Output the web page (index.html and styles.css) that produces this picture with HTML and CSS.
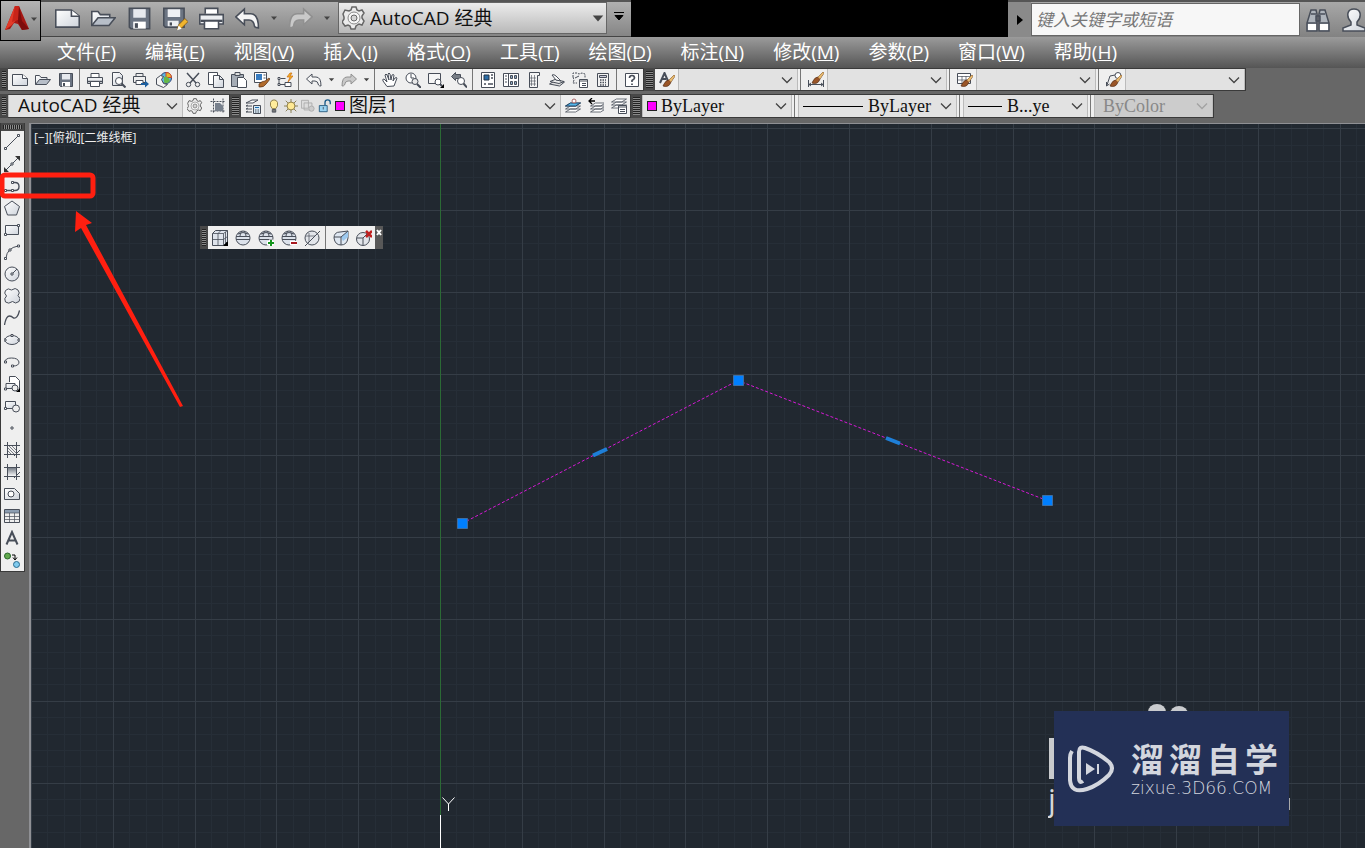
FILE: index.html
```html
<!DOCTYPE html>
<html lang="zh-CN">
<head>
<meta charset="utf-8">
<title>AutoCAD 经典</title>
<link rel="stylesheet" href="styles.css">
</head>
<body>
<svg class="defs" aria-hidden="true">
  <defs>
    <linearGradient id="paper" x1="0" y1="0" x2="1" y2="1"><stop offset="0" stop-color="#fff"/><stop offset="1" stop-color="#cfd4dc"/></linearGradient>
    <linearGradient id="shade" x1="0" y1="0" x2="0" y2="1"><stop offset="0" stop-color="#6e7580"/><stop offset="1" stop-color="#fff"/></linearGradient>
  </defs>
  <symbol id="new" viewBox="0 0 16 16"><path d="M.5 2.500h10l5 4v7H.5z" fill="url(#paper)"/><path d="M10.500 2.500v4h5" fill="#fff"/></symbol>
  <symbol id="open" viewBox="0 0 16 16"><path d="M.5 12.500v-9h4l1.500 2h6v2" fill="url(#paper)"/><path d="M.5 12.500l4-5h11l-4 5z" fill="#b7bec8"/></symbol>
  <symbol id="save" viewBox="0 0 16 16"><path d="M1.500 1.500h13v13h-12l-1-1z" fill="#6b7482"/><path d="M4 2h8v5.500H4z" fill="#e6e9ee" stroke="none"/><path d="M4 10h8v4.500H4z" fill="#fff" stroke="none"/><path d="M6 11v3" stroke-width="2"/></symbol>
  <symbol id="pencil" viewBox="0 0 16 16"><path d="M.5 1.500h13v12h-12l-1-1z" fill="#6b7482"/><path d="M3 2h8v5H3zM3 9.500h7V13H3z" fill="#eef0f3" stroke="none"/><path d="M5 10.500v2" stroke-width="1.500"/><path d="M9 15l1-3 4-4 2 2-4 4z" fill="#f1b52e" stroke="#745014" stroke-width=".5"/><path d="M9 15.500l1-3 2 2z" fill="#fff" stroke="none"/></symbol>
  <symbol id="print" viewBox="0 0 16 16"><path d="M4 5V1.500h8V5" fill="#fff"/><path d="M.5 5.500h15v6H.5z" fill="#eceef1"/><path d="M1 9.500h14" stroke-width="1.500"/><path d="M3.500 9.500h9v5h-9z" fill="#fff"/></symbol>
  <symbol id="undo" viewBox="0 0 16 16"><path d="M.5 7L6 2v3h4q5 0 5 9-2 0-2.500-1-.5-4-3.500-4H6v3z" fill="#f5f5f5"/></symbol>
  <symbol id="redo" viewBox="0 0 16 16"><path d="M15.500 7L10 2v3H6q-5 0-5 9 2 0 2.500-1 .5-4 3.500-4h3v3z" fill="#c9c9c9" stroke="#909090"/></symbol>
  <symbol id="down" viewBox="0 0 8 8"><path d="M1 2.500h6L4 6z" fill="#444" stroke="none"/></symbol>
  <symbol id="chev" viewBox="0 0 12 12"><path d="M1 3.500l5 5 5-5" stroke="#444" stroke-width="1.300"/></symbol>
  <symbol id="gear" viewBox="0 0 24 24"><path d="M10 1h4l1 3 2 1 3-1 2 3-2 3v2l2 3-2 4-3-1-3 2-1 3h-4l-1-3-2-1-3 1-3-4 2-3v-2L1 8l2-4 4 1 2-1z" fill="#ececec" stroke="#666" stroke-width="1.500"/><circle cx="12" cy="12" r="6" fill="#f7f7f7" stroke="#888"/><circle cx="12" cy="12" r="3" fill="#d4d4d4" stroke="#666"/></symbol>
  <symbol id="preview" viewBox="0 0 16 16"><path d="M2.500.5h7l3 3v10h-10z" fill="url(#paper)"/><circle cx="9" cy="9" r="3.500" fill="#fff"/><path d="M11.500 11.500l4 4" stroke-width="2"/></symbol>
  <symbol id="publish" viewBox="0 0 16 16"><path d="M3 4V1.500h7V4M.5 4.500h12v6H.5z" fill="#eee"/><path d="M3 8.500h7v4H3z" fill="#fff"/><path d="M8 11h4V8.500l4 3.500-4 3.500V13H8z" fill="#1c5f9f" stroke="none"/></symbol>
  <symbol id="globe" viewBox="0 0 16 16"><circle cx="10" cy="6" r="5.500" fill="#58b8e4" stroke="#347"/><path d="M10 .5q5 0 5.500 5H10z" fill="#e9b62b" stroke="#c43"/><path d="M8 5q4-2 6 4-4 4-6 1z" fill="#67b848" stroke="none"/><path d="M.5 6.500l4-3 3 1-2 3 2 4 4 1-4 3-7-3z" fill="#f4f4f4"/></symbol>
  <symbol id="cut" viewBox="0 0 16 16"><path d="M2 1l9 10M14 1L5 11" stroke-width="1.500"/><circle cx="3.500" cy="12.500" r="2.200"/><circle cx="12.500" cy="12.500" r="2.200"/></symbol>
  <symbol id="copy" viewBox="0 0 16 16"><path d="M.5.5h9v12h-9z" fill="#fff"/><path d="M5.500 3.500h6l4 4v8h-10z" fill="url(#paper)"/><path d="M11.500 3.500v4h4"/></symbol>
  <symbol id="paste" viewBox="0 0 16 16"><path d="M.5 2.500h12v12H.5z" fill="#a5acb5"/><path d="M4 .5h5v3H4z" fill="#ddd"/><path d="M6.500 5.500h6l3 3v7h-9z" fill="#fff"/></symbol>
  <symbol id="match" viewBox="0 0 16 16"><path d="M.5.5h12v10H.5z" fill="#fff"/><path d="M2 2h6v6H2z" fill="#367bc0" stroke="none"/><path d="M9.500 3h2M9.500 6h2"/><path d="M5 12q3-3 6-3l4-3 1 1-3 4q-3 5-8 4z" fill="#b06a2b" stroke="#5b3418" stroke-width=".7"/></symbol>
  <symbol id="block" viewBox="0 0 16 16"><path d="M2 12.500h7M2 8v4M3.500 6.500h5"/><path d="M1 5.500h2v2H1zM1 11.500h2v2H1zM8 10.500h6v4H8z" fill="#fff"/><path d="M13 1l-3 4h3l-2 5 5-6h-3l2-3z" fill="#f9b221" stroke="#c96a12" stroke-width=".7"/></symbol>
  <symbol id="hand" viewBox="0 0 16 16"><path d="M5 14.500L1 9q-1-2 1-2l3 3-2-7q1-2 2 0l2 5-1-6q1-2 2 0l1 6 1-5q2-1 2 0l-1 6 2-3q2-1 2 0l-3 8z" fill="#fff"/></symbol>
  <symbol id="zoomrt" viewBox="0 0 16 16"><circle cx="6" cy="6" r="5" fill="#fff"/><path d="M6 2v4h3"/><circle cx="10" cy="9.500" r="3" fill="#e8e8e8"/><path d="M12 12l4 4" stroke-width="2"/></symbol>
  <symbol id="zoomwin" viewBox="0 0 16 16"><path d="M.5 1.500h12v10H.5z" fill="#f6f6f6"/><circle cx="10" cy="10" r="3" fill="#fff"/><path d="M12 12l2 2" stroke-width="2"/><path d="M16 12v4h-4z" fill="#000" stroke="none"/></symbol>
  <symbol id="zoomprev" viewBox="0 0 16 16"><path d="M.5 4.500l4-4v2h5v4h-5v2z" fill="#777d85"/><circle cx="10" cy="9" r="3.500" fill="#fff"/><path d="M12.500 11.500l3.500 4" stroke-width="2"/></symbol>
  <symbol id="props" viewBox="0 0 16 16"><path d="M1.500.5h13v15h-13z" fill="#fff"/><path d="M4 3h5v5H4z" fill="#2b6da7" stroke="#234"/><path d="M11 3h2M11 6h2M4 12h2M8 12h5" stroke-width="1.500"/></symbol>
  <symbol id="design" viewBox="0 0 16 16"><path d="M.5 1.500h15v13H.5zM5.500 1.500v13" fill="#fff"/><path d="M2 4h2M2 7h2M2 10h2M7.500 3.500h2v3h-2zM11.500 3.500h2v3h-2zM7.500 9.500h2v3h-2zM11.500 9.500h2v3h-2z" fill="#8ba7c2"/></symbol>
  <symbol id="palette" viewBox="0 0 16 16"><path d="M3.500.5h10v3h-2v12h-8z" fill="#f5f5f5"/><path d="M5.500 3v11M8.500 3v11M4 6h6M4 9h6M4 12h6" stroke-width=".6"/></symbol>
  <symbol id="sheets" viewBox="0 0 16 16"><path d="M.5 12l5-3 10 1-5 4z" fill="#ddd"/><path d="M1 9.500l5-2 9 2-5 2z" fill="#eee"/><path d="M3 3q2-1 4 1l5 5-5-1z" fill="#fff"/></symbol>
  <symbol id="markup" viewBox="0 0 16 16"><path d="M1 5V1h4l2 1 3-1 3 1v4M1 5l1 3-1 3h4" stroke-dasharray="2 1"/><path d="M3 6l4-2M7.500 7.500h8v8h-8z" fill="#fff"/><path d="M8 9h7M10 11.500h4M10 13.500h4"/></symbol>
  <symbol id="calc" viewBox="0 0 16 16"><path d="M2.500 1.500h11v13h-11z" fill="#f3f3f3"/><path d="M4.500 3.500h7v2h-7z" fill="#ccd"/><path d="M5 8h6M5 10.500h6M5 13h6" stroke-dasharray="1.500 1" stroke-width="1.500"/></symbol>
  <symbol id="help" viewBox="0 0 16 16"><path d="M1.500 1.500h13v13h-13z" fill="#fff"/><path d="M5.500 6q0-2.500 2.500-2.500T10.500 6Q10.500 7 8 8.500V10M8 11.500v1.500" stroke-width="1.700"/></symbol>
  <symbol id="brush" viewBox="0 0 16 16"><path d="M5 12q2-4 5-4l5-5 1 1-4 6q-2 6-8 4z" fill="#9a5527" stroke="#54301a" stroke-width=".7"/><path d="M10 8l5-5 1 1-4 6z" fill="#e7bb70" stroke="none"/></symbol>
  <symbol id="textstyle" viewBox="0 0 16 16"><path d="M1 11L5.500 1 9 9M3 7h4" stroke-width="2"/><use href="#brush"/></symbol>
  <symbol id="dimstyle" viewBox="0 0 16 16"><path d="M.5 8v7M15.500 8v7M1 12.500h14M3 11l-2 1.500L3 14M13 11l2 1.500-2 1.500"/><use href="#brush" y="-3"/></symbol>
  <symbol id="tablestyle" viewBox="0 0 16 16"><path d="M.5 1.500h13v10H.5z" fill="#fff"/><path d="M.5 4.500h13M.5 8h13M5 4v7M9 4v7" stroke-width=".7"/><use href="#brush"/></symbol>
  <symbol id="leader" viewBox="0 0 16 16"><path d="M1 13L4 4l5-1M.5 10v4l3-2"/><circle cx="12" cy="3.500" r="3" fill="#fff"/><use href="#brush"/></symbol>
  <symbol id="snap" viewBox="0 0 16 16"><path d="M3.500.5v15M13 .5v15M.5 3.500h15M.5 13h15" stroke-dasharray="2 1"/><path d="M5 5h5l3 3v5H5z" fill="#78818d" stroke="none"/></symbol>
  <symbol id="layers" viewBox="0 0 16 16"><path d="M1 5l6-3h6L8 5zM3 7L1 8h6M3 10l-2 1h6M3 13l-2 1h6" fill="#fff"/><path d="M8.500 7.500h7v8h-7z" fill="#d8eaf6"/><path d="M10 9.500h4" stroke="#1c6db0"/><path d="M10 12h4M10 14h4" stroke-dasharray="1 .5"/></symbol>
  <symbol id="bulb" viewBox="0 0 16 16"><path d="M6 11Q3 8 4 4q1-3 4-3t4 3q1 4-2 7z" fill="#ffec9b" stroke="#84733b"/><path d="M6 12h4v3H6z" fill="#777"/></symbol>
  <symbol id="sun" viewBox="0 0 16 16"><path d="M8 0v16M0 8h16M2 2l12 12M14 2L2 14" stroke="#817646"/><circle cx="8" cy="8" r="4.500" fill="#ffe994" stroke="#81713b"/></symbol>
  <symbol id="freeze" viewBox="0 0 16 16"><path d="M.5 1.500h8v9h-8zM3.500 4.500h9v8h-9z" fill="#ddd" stroke="#aaa"/><circle cx="12" cy="11" r="3" fill="#ccc" stroke="#aaa"/></symbol>
  <symbol id="lock" viewBox="0 0 16 16"><path d="M8 7V4q0-3 3-3t3 3v2" stroke="#185a89" stroke-width="1.500"/><path d="M1.500 7.500h9v7h-9z" fill="#9bd4f3" stroke="#22577c"/><path d="M6 9v3"/></symbol>
  <symbol id="stack" viewBox="0 0 16 16"><path d="M.5 14l5-3h10l-5 3zM.5 11l5-3h10l-5 3zM.5 8l5-3h10l-5 3z" fill="#fff" stroke-width=".8"/></symbol>
  <symbol id="laycur" viewBox="0 0 16 16"><use href="#stack"/><path d="M.5 8l5-3h10l-5 3z" fill="#55b8eb" stroke="#246"/><circle cx="9" cy="3" r="2" fill="#fff" stroke="#a66"/></symbol>
  <symbol id="layprev" viewBox="0 0 16 16"><use href="#stack" x="2"/><path d="M1 3h6M4 0L1 3l3 3" stroke="#000" stroke-width="1.300"/></symbol>
  <symbol id="laystate" viewBox="0 0 16 16"><use href="#stack" y="-4"/><path d="M7.500 7.500h8v8h-8z" fill="#fff"/><path d="M8 9h7M9 11.500h5M9 13.500h5"/></symbol>
  <symbol id="line" viewBox="0 0 16 16"><path d="M2 14L14 2"/><path d="M.5 13.500h2v2h-2zM13.500.5h2v2h-2z" fill="#fff"/></symbol>
  <symbol id="xline" viewBox="0 0 16 16"><path d="M2 14L14 2"/><path d="M0 16v-5l5 5zM16 0v5l-5-5z" fill="#333" stroke="none"/><path d="M7 7h2v2H7z" fill="#fff"/></symbol>
  <symbol id="pline" viewBox="0 0 16 16"><path d="M2 12.500h6M9 4.500h2q4 0 4 4t-4 4H8" stroke-width="1.400"/><path d="M.5 11.500h2v2h-2zM7.500 11.500h2v2h-2zM7.500 3.500h2v2h-2z" fill="#fff"/></symbol>
  <symbol id="polygon" viewBox="0 0 16 16"><path d="M8 1l7.500 5.500-3 8.500h-9L.5 6.500z" fill="url(#paper)"/></symbol>
  <symbol id="rect" viewBox="0 0 16 16"><path d="M1.500 3.500h13v9h-13z" fill="url(#paper)"/><path d="M.5 11.500h2v2h-2zM13.500 2.500h2v2h-2z" fill="#fff"/></symbol>
  <symbol id="arc" viewBox="0 0 16 16"><path d="M2 14Q3 4 14 2"/><path d="M.5 13.500h2v2h-2zM13.500 1h2v2h-2zM5 5h2v2H5z" fill="#fff"/></symbol>
  <symbol id="circle" viewBox="0 0 16 16"><circle cx="8" cy="8" r="7" fill="url(#paper)"/><path d="M8 8l5-5"/><path d="M7 7h2v2H7z" fill="#fff"/></symbol>
  <symbol id="cloud" viewBox="0 0 16 16"><path d="M2.500 8Q-.5 5 1.500 2.500 4-.5 7.500 2q4-3 6.500 0 2.500 3 0 5.500 3.500 3 1 6-3.500 3-6.500 0-4 3-7 .5Q-.5 10.500 2.500 8z" fill="url(#paper)"/></symbol>
  <symbol id="spline" viewBox="0 0 16 16"><path d="M.5 15Q2 6 5.500 6q2 0 4 2 4 1 6-7.500" stroke-width="1.300"/></symbol>
  <symbol id="ellipse" viewBox="0 0 16 16"><ellipse cx="8" cy="8" rx="7" ry="4.500" fill="url(#paper)"/><path d="M0 7h2v2H0zM14 7h2v2h-2zM7 2.500h2v2H7z" fill="#fff"/></symbol>
  <symbol id="earc" viewBox="0 0 16 16"><path d="M1 8q0-4 6.500-4T15 8q0 4-6 4"/><path d="M.5 7h2v2h-2zM7.500 11h2v2h-2z" fill="#fff"/></symbol>
  <symbol id="insert" viewBox="0 0 16 16"><path d="M5.500 6V.5h6l4 4V14" fill="#fff"/><path d="M2 7.500h9v5H2z" fill="url(#paper)"/><circle cx="11" cy="12" r="3" fill="#eee"/><path d="M.5 12h2v2h-2z" fill="#fff"/><path d="M16 12v4h-4z" fill="#000" stroke="none"/></symbol>
  <symbol id="mkblock" viewBox="0 0 16 16"><path d="M1.500 3.500h10v7h-10z" fill="url(#paper)"/><circle cx="12" cy="10.500" r="3.500" fill="#eee"/><path d="M.5 9.500h2v2h-2z" fill="#fff"/></symbol>
  <symbol id="point" viewBox="0 0 16 16"><path d="M7 7h2v2H7z" fill="#fff"/></symbol>
  <symbol id="hatch" viewBox="0 0 16 16"><path d="M3.500 0v16M12.500 0v16M0 3.500h16M0 12.500h16M10 14l6-6"/><path d="M4 9l4 4M4 6l6 6M5 4l7 7M8 4l4 4" stroke-width=".7"/></symbol>
  <symbol id="gradient" viewBox="0 0 16 16"><path d="M3.500 3.500h9v9h-9z" fill="url(#shade)"/><path d="M3.500 0v16M12.500 0v16M0 3.500h16M0 12.500h16M10 14l6-6"/></symbol>
  <symbol id="region" viewBox="0 0 16 16"><path d="M.5 2.500h10l5 5v6H.5z" fill="url(#paper)"/><circle cx="7" cy="8" r="3" fill="#fff"/></symbol>
  <symbol id="table" viewBox="0 0 16 16"><path d="M1 2h14v3H1z" fill="#8d9eb2" stroke="none"/><path d="M.5 1.500h15v13H.5z"/><path d="M1 5h14M1 8.500h14M1 11.500h14M5.500 5v9M10.500 5v9" stroke-width=".7"/></symbol>
  <symbol id="mtext" viewBox="0 0 16 16"><path d="M2.500 14.500L8 2l5.500 12.500M4.500 10.500h7" stroke-width="2"/></symbol>
  <symbol id="addsel" viewBox="0 0 16 16"><circle cx="3.500" cy="4" r="3" fill="#62a94d" stroke="#28662a"/><circle cx="12.500" cy="12.500" r="3" fill="#82cbee" stroke="#286b90"/><path d="M8 3h3v4M9 5.500L11 8l2-2.500" stroke="#000"/></symbol>
  <symbol id="cube" viewBox="0 0 16 16"><path d="M.5 3.500l3-3h12v11l-4 4H.5z" fill="#dfe4ec"/><path d="M.5 3.500h11v12M11.500 3.500l4-3M6 3.500v12M.5 9.500h11l4-3M6 3.500l3-3M13.500 2v12" stroke-width=".8"/><path d="M16 11v5h-5z" fill="#000" stroke="none"/></symbol>
  <symbol id="ball" viewBox="0 0 16 16"><circle cx="8" cy="8" r="7" fill="#dce2eb"/><path d="M1 6.500h14M1 9.500h14M3 4q5-3 10 0M5 6q0-3 2-5M11 6q0-3-2-5"/></symbol>
  <symbol id="balladd" viewBox="0 0 16 16"><use href="#ball"/><path d="M9 13h7M13 9.500v7" stroke="#fff" stroke-width="4"/><path d="M10 13h6M13 10v6" stroke="#14951d" stroke-width="2"/></symbol>
  <symbol id="ballsub" viewBox="0 0 16 16"><use href="#ball"/><path d="M9 13h7" stroke="#fff" stroke-width="4"/><path d="M10 13h6" stroke="#a71920" stroke-width="2"/></symbol>
  <symbol id="balloff" viewBox="0 0 16 16"><circle cx="8" cy="8" r="7" fill="#e2e5ea"/><path d="M5 3v9M2 6h9" stroke-width=".7"/><path d="M1 16L16 1"/></symbol>
  <symbol id="ballcut" viewBox="0 0 16 16"><path d="M1 8q0-6 6-6l8-1v7q-1 7-7 7T1 8z" fill="#dfe7f1"/><path d="M8 7l7-6v6l-5 4z" fill="#9cc8ee" stroke="none"/><path d="M1 7h7l7-6M8 7v8"/></symbol>
  <symbol id="balldel" viewBox="0 0 16 16"><circle cx="7" cy="9" r="6.500" fill="#e2e5ea"/><path d="M1 8h6l4-4M7 8v7"/><path d="M10 1l6 6M16 1l-6 6" stroke="#c02020" stroke-width="2.500"/></symbol>
</svg>

<header class="title">
  <div class="quick">
    <button class="app" aria-label="应用程序菜单"><svg width="26" height="28" viewBox="0 0 26 28"><g stroke="none"><path d="M11 1h4l10 23-7 1-4-6-4-1-4 6-5 1z" fill="#a51713"/><path d="M11 1l2 13-5 6-7 5z" fill="#e23a28"/><path d="M15 1l3 15 7 8-7 1-4-8-1-8z" fill="#7d0d0d"/><path d="M11 1h4l-1 14-6 2z" fill="#c82419"/></g></svg><svg class="arr"><use href="#down"/></svg></button>
    <div class="qicons">
      <button aria-label="新建"><svg class="big"><use href="#new"/></svg></button>
      <button aria-label="打开"><svg class="big"><use href="#open"/></svg></button>
      <button aria-label="保存"><svg class="big"><use href="#save"/></svg></button>
      <button aria-label="另存为"><svg class="big"><use href="#pencil"/></svg></button>
      <button aria-label="打印"><svg class="big"><use href="#print"/></svg></button>
      <button aria-label="放弃"><svg class="big"><use href="#undo"/></svg></button>
      <button class="slim" aria-label="放弃列表"><svg class="arr"><use href="#down"/></svg></button>
      <button aria-label="重做"><svg class="big"><use href="#redo"/></svg></button>
      <button class="slim" aria-label="重做列表"><svg class="arr"><use href="#down"/></svg></button>
    </div>
    <label class="combo space"><svg class="gear"><use href="#gear"/></svg><select aria-label="工作空间"><option>AutoCAD 经典</option></select><svg class="arr wide"><use href="#down"/></svg></label>
    <button class="more" aria-label="自定义"><svg width="12" height="12"><path d="M1 1.500h10M2 4.500h8L6 9z" fill="#000" stroke="#000"/></svg></button>
  </div>
  <div class="info">
    <button class="expand" aria-label="展开"><svg width="8" height="12"><path d="M1 1l6 5-6 5z" fill="#000" stroke="none"/></svg></button>
    <input type="text" aria-label="搜索" placeholder="键入关键字或短语">
    <button aria-label="搜索"><svg width="26" height="26" viewBox="0 0 26 26"><path d="M6 3h5l1 4v17H2v-8zM15 3h5l4 13v8H14V7z" fill="#aeb4bc" stroke-width="1.500"/><path d="M3 17h8v6H3zM15 17h8v6h-8z" fill="#fff" stroke="none"/><path d="M2 16h10M14 16h10M11 9h4v5h-4zM6 7h5M15 7h5" stroke-width="1.500"/></svg></button>
    <button aria-label="登录"><svg width="26" height="26" viewBox="0 0 26 26"><path d="M10 15Q6 11 7 6q1-4 6-4t6 4q1 5-3 9v3l8 3v3H2v-3l8-3z" fill="url(#paper)" stroke-width="1.500"/></svg></button>
  </div>
</header>

<nav class="menu">
  <a href="#">文件(<u>F</u>)</a><a href="#">编辑(<u>E</u>)</a><a href="#">视图(<u>V</u>)</a><a href="#">插入(<u>I</u>)</a><a href="#">格式(<u>O</u>)</a><a href="#">工具(<u>T</u>)</a><a href="#">绘图(<u>D</u>)</a><a href="#">标注(<u>N</u>)</a><a href="#">修改(<u>M</u>)</a><a href="#">参数(<u>P</u>)</a><a href="#">窗口(<u>W</u>)</a><a href="#">帮助(<u>H</u>)</a>
</nav>

<div class="bars">
  <div class="bar">
    <i class="grip"></i>
    <div class="panel">
      <button aria-label="新建"><svg><use href="#new"/></svg></button><button aria-label="打开"><svg><use href="#open"/></svg></button><button aria-label="保存"><svg><use href="#save"/></svg></button><i class="sep"></i>
      <button aria-label="打印"><svg><use href="#print"/></svg></button><button aria-label="预览"><svg><use href="#preview"/></svg></button><button aria-label="发布"><svg><use href="#publish"/></svg></button><button aria-label="三维打印"><svg><use href="#globe"/></svg></button><i class="sep"></i>
      <button aria-label="剪切"><svg><use href="#cut"/></svg></button><button aria-label="复制"><svg><use href="#copy"/></svg></button><button aria-label="粘贴"><svg><use href="#paste"/></svg></button><button aria-label="特性匹配"><svg><use href="#match"/></svg></button><button aria-label="块编辑器"><svg><use href="#block"/></svg></button><i class="sep"></i>
      <button aria-label="放弃"><svg><use href="#undo"/></svg></button><button class="tiny" aria-label="放弃列表"><svg><use href="#down"/></svg></button><button aria-label="重做"><svg><use href="#redo"/></svg></button><button class="tiny" aria-label="重做列表"><svg><use href="#down"/></svg></button><i class="sep"></i>
      <button aria-label="平移"><svg><use href="#hand"/></svg></button><button aria-label="实时缩放"><svg><use href="#zoomrt"/></svg></button><button aria-label="窗口缩放"><svg><use href="#zoomwin"/></svg></button><button aria-label="缩放上一个"><svg><use href="#zoomprev"/></svg></button><i class="sep"></i>
      <button aria-label="特性"><svg><use href="#props"/></svg></button><button aria-label="设计中心"><svg><use href="#design"/></svg></button><button aria-label="工具选项板"><svg><use href="#palette"/></svg></button><button aria-label="图纸集"><svg><use href="#sheets"/></svg></button><button aria-label="标记集"><svg><use href="#markup"/></svg></button><button aria-label="计算器"><svg><use href="#calc"/></svg></button><i class="sep"></i>
      <button aria-label="帮助"><svg><use href="#help"/></svg></button>
    </div>
    <i class="grip"></i>
    <div class="panel">
      <button aria-label="文字样式"><svg><use href="#textstyle"/></svg></button><label class="combo style"><select aria-label="文字样式"><option></option></select><svg class="chev"><use href="#chev"/></svg></label><i class="sep"></i>
      <button aria-label="标注样式"><svg><use href="#dimstyle"/></svg></button><label class="combo style"><select aria-label="标注样式"><option></option></select><svg class="chev"><use href="#chev"/></svg></label><i class="sep"></i>
      <button aria-label="表格样式"><svg><use href="#tablestyle"/></svg></button><label class="combo style"><select aria-label="表格样式"><option></option></select><svg class="chev"><use href="#chev"/></svg></label><i class="sep"></i>
      <button aria-label="引线样式"><svg><use href="#leader"/></svg></button><label class="combo style"><select aria-label="引线样式"><option></option></select><svg class="chev"><use href="#chev"/></svg></label>
    </div>
  </div>
  <div class="bar low">
    <i class="grip"></i>
    <div class="panel">
      <label class="combo ws"><select aria-label="工作空间"><option>AutoCAD 经典</option></select><svg class="chev"><use href="#chev"/></svg></label>
      <button aria-label="工作空间设置"><svg><use href="#gear"/></svg></button><button aria-label="我的工作空间"><svg><use href="#snap"/></svg></button>
    </div>
    <i class="grip"></i>
    <div class="panel">
      <button aria-label="图层特性"><svg><use href="#layers"/></svg></button>
      <label class="combo layer"><svg><use href="#bulb"/></svg><svg><use href="#sun"/></svg><svg><use href="#freeze"/></svg><svg><use href="#lock"/></svg><i class="swatch"></i><select aria-label="图层"><option>图层1</option></select><svg class="chev"><use href="#chev"/></svg></label>
      <button aria-label="置为当前"><svg><use href="#laycur"/></svg></button><button aria-label="上一个图层"><svg><use href="#layprev"/></svg></button><button aria-label="图层状态"><svg><use href="#laystate"/></svg></button>
    </div>
    <i class="grip"></i>
    <div class="panel props">
      <label class="combo color"><i class="swatch"></i><select aria-label="颜色"><option>ByLayer</option></select><svg class="chev"><use href="#chev"/></svg></label><i class="sep"></i>
      <label class="combo ltype"><i class="rule"></i><select aria-label="线型"><option>ByLayer</option></select><svg class="chev"><use href="#chev"/></svg></label><i class="sep"></i>
      <label class="combo lweight"><i class="rule"></i><select aria-label="线宽"><option>B...ye</option></select><svg class="chev"><use href="#chev"/></svg></label><i class="sep"></i>
      <label class="combo plot"><select aria-label="打印样式" disabled><option>ByColor</option></select><svg class="chev"><use href="#chev"/></svg></label>
    </div>
  </div>
</div>

<main class="work">
  <aside class="tools">
    <i class="hgrip"></i>
    <button aria-label="直线"><svg><use href="#line"/></svg></button><button aria-label="构造线"><svg><use href="#xline"/></svg></button><button aria-label="多段线"><svg><use href="#pline"/></svg></button><button aria-label="多边形"><svg><use href="#polygon"/></svg></button><button aria-label="矩形"><svg><use href="#rect"/></svg></button><button aria-label="圆弧"><svg><use href="#arc"/></svg></button><button aria-label="圆"><svg><use href="#circle"/></svg></button><button aria-label="修订云线"><svg><use href="#cloud"/></svg></button><button aria-label="样条曲线"><svg><use href="#spline"/></svg></button><button aria-label="椭圆"><svg><use href="#ellipse"/></svg></button><button aria-label="椭圆弧"><svg><use href="#earc"/></svg></button><button aria-label="插入块"><svg><use href="#insert"/></svg></button><button aria-label="创建块"><svg><use href="#mkblock"/></svg></button><button aria-label="点"><svg><use href="#point"/></svg></button><button aria-label="图案填充"><svg><use href="#hatch"/></svg></button><button aria-label="渐变色"><svg><use href="#gradient"/></svg></button><button aria-label="面域"><svg><use href="#region"/></svg></button><button aria-label="表格"><svg><use href="#table"/></svg></button><button aria-label="多行文字"><svg><use href="#mtext"/></svg></button><button aria-label="添加选定对象"><svg><use href="#addsel"/></svg></button>
  </aside>
  <section class="canvas">
    <svg class="drawing">
      <g id="grid"></g>
      <g transform="translate(-31 -124)">
        <path d="M440.500 124v691" stroke="#2b6a35"/>
        <path d="M440.500 815v60" stroke="#fff"/>
        <path d="M442.500 797.500l6 6.500 6-6.500M448.500 804v7" stroke="#fff"/>
        <path d="M462 523.500L738 380.500L1047 500.500" stroke="#d619d6" stroke-dasharray="3 2"/>
        <path d="M593 455.500l14-6.500M886 438l14 5.500" stroke="#1e7fd8" stroke-width="4"/>
        <path d="M457.500 518.500h10v10h-10zM733.500 375.500h10v10h-10zM1042.500 495.500h10v10h-10z" fill="#007fff" stroke="#3d6fa5"/>
      </g>
    </svg>
    <div class="viewlabel">[−][俯视][二维线框]</div>
    <div class="float">
      <i class="grip"></i>
      <div class="panel">
        <button aria-label="平滑对象"><svg><use href="#cube"/></svg></button><button aria-label="平滑网格"><svg><use href="#ball"/></svg></button><button aria-label="提高平滑度"><svg><use href="#balladd"/></svg></button><button aria-label="降低平滑度"><svg><use href="#ballsub"/></svg></button><button aria-label="优化网格"><svg><use href="#balloff"/></svg></button><i class="sep"></i><button aria-label="添加锐化"><svg><use href="#ballcut"/></svg></button><button aria-label="删除锐化"><svg><use href="#balldel"/></svg></button>
      </div>
      <button class="close" aria-label="关闭"><svg width="6" height="7"><path d="M1 1l4 5M5 1L1 6" stroke="#fff" stroke-width="2"/></svg></button>
    </div>
    <div class="mark">
      <svg class="under" width="250" height="125"><path d="M1 35h6v41H1z" fill="#c9cbce"/><ellipse cx="109" cy="9" rx="9" ry="8" fill="#c9cbce"/><ellipse cx="131" cy="11" rx="9" ry="8" fill="#c9cbce"/><path d="M241 95h1v12h-1z" fill="#aaa"/><text x="0" y="108" class="jing">j</text></svg>
      <div class="badge">
        <svg width="48" height="50" viewBox="0 0 48 50"><path d="M16 37q-4 3-4-3V8q0-6 6-4 12 4 24 14 6 6 0 13-10 10-22 14Q4 50 3 36V14q0-4 2-7" stroke-width="4"/><path d="M19 19l9 6-9 6z" fill="#d3d6de" stroke="none"/><path d="M31 20v10" stroke-width="2"/></svg>
        <div class="brand"><div class="cn"><span>溜</span><span>溜</span><span>自</span><span>学</span></div><div class="url">zixue.3D66.COM</div></div>
      </div>
    </div>
  </section>
  <svg class="note" width="190" height="300"><rect x="2" y="52" width="91" height="21" rx="3" stroke="#ff1f10" stroke-width="5"/><path d="M76 88l16 12-6 2 97 181-3 1L81 105l-6 4z" fill="#ff1f10" stroke="none"/></svg>
</main>
<script src="grid.js"></script>
</body>
</html>
```
FILE: styles.css
```css
* { box-sizing: border-box; }
body { margin: 0; min-height: 100vh; display: flex; flex-direction: column; overflow: hidden; background: #676767; font-family: "Open Sans", "Noto Sans CJK SC", sans-serif; color: #111; }
button { display: flex; align-items: center; justify-content: center; flex: none; padding: 0; border: 0; background: none; }
svg { flex: none; fill: none; stroke: #484e59; }
.defs { position: absolute; width: 0; height: 0; }
select, input { font: inherit; color: inherit; border: 0; outline: 0; min-width: 0; }
select { appearance: none; flex: 1; padding: 0; background: transparent; opacity: 1; }

.title { display: flex; justify-content: space-between; height: 37px; background: #000; }
.quick { position: relative; display: flex; width: 631px; padding-left: 49px; border-top: 2px solid #555; border-bottom: 1px solid #444; background: linear-gradient(#b0b0b0, #858585); }
.app { position: absolute; z-index: 1; left: 0; top: -2px; width: 41px; height: 41px; padding-bottom: 4px; border: 1px solid #000; background: linear-gradient(#b4b4b4, #858585); }
.qicons { display: flex; flex: 1; align-items: center; padding-bottom: 2px; }
.qicons button { width: 36px; }
.qicons .slim { width: 17px; }
.big { width: 25px; height: 25px; }
.arr { width: 8px; height: 8px; }
.arr.wide { width: 14px; height: 14px; }
.combo { display: flex; align-items: center; flex: none; height: 100%; padding: 0 4px; background: #e2e2e2; border: 1px solid #bbb; border-width: 0 1px; }
.combo select { font-size: 19px; line-height: 24px; }
.space { width: 269px; height: 32px; padding: 0 1px 0 3px; gap: 4px; background: linear-gradient(#ececec, #b9b9b9); border: 1px solid #666; }
.gear { width: 24px; height: 24px; }
.more { width: 24px; padding-bottom: 4px; }
.info { display: flex; align-items: stretch; width: 357px; border-top: 2px solid #555; background: linear-gradient(#a8a8a8, #828282); }
.info button { width: 36px; }
.info .expand { width: 23px; background: #8a8a8a; }
.info input { flex: 1; margin: 1px 0; padding: 0 4px; border: 1px solid #666; background: #f7f7f7; font-size: 17px; font-style: italic; }
.info input::placeholder { color: #777; opacity: 1; }
.info { margin-right: -7px; width: 364px; }

.menu { display: flex; gap: 29px; align-items: center; height: 31px; padding: 0 0 2px 57px; background: linear-gradient(#9b9b9b, #555); }
.menu a { color: #fff; font-size: 19px; line-height: 28px; text-decoration: none; white-space: nowrap; }

.bars { display: flex; flex-direction: column; gap: 3px; padding-bottom: 5px; }
.bar { display: flex; height: 23px; }
.bar.low { height: 24px; }
.low select { margin-top: -3px; }
.panel { display: flex; flex: none; background: #efefef; border: 1px solid #3a3a3a; border-left: 0; }
.panel button { width: 23px; }
.panel button svg { width: 16px; height: 16px; }
.panel .tiny { width: 12px; }
.panel .tiny svg { width: 7px; height: 7px; }
.grip { flex: none; width: 11px; border: 3px solid #484848; border-width: 3px 2px; background: repeating-linear-gradient(#222 0 1px, #8a8a8a 1px 2px); }
.grip:first-child { width: 8px; }
.sep { flex: none; width: 6px; background: linear-gradient(90deg, transparent 2px, #777 2px 3px, transparent 3px); }
.chev { width: 12px; height: 12px; }
.style { width: 120px; }
.ws { width: 175px; padding-left: 9px; }
.layer { width: 297px; padding-left: 2px; }
.layer > svg:not(.chev) { width: 14px; height: 14px; margin-right: 3px; }
.swatch { width: 10px; height: 10px; margin-right: 4px; background: #f0f; border: 1px solid #222; }
.props select { margin-top: 0; font-family: "Liberation Serif", serif; font-size: 18px; line-height: 22px; }
.color { width: 150px; }
.ltype { width: 159px; }
.lweight { width: 125px; }
.plot { width: 119px; padding-left: 8px; background: #ccc; color: #888; }
.plot .chev { opacity: .3; }
.rule { width: 60px; height: 1px; margin-right: 5px; background: #000; }
.lweight .rule { width: 34px; }

.work { position: relative; display: flex; flex: 1; align-items: stretch; }
.tools { flex: none; align-self: flex-start; width: 25px; margin-right: 4px; padding-right: 2px; background: #efefef; border: 1px solid #3a3a3a; border-width: 0 1px 1px; }
.tools button { width: 100%; height: 22px; }
.tools svg { width: 16px; height: 16px; }
.hgrip { display: block; height: 8px; margin-right: -2px; border: 2px solid #484848; background: repeating-linear-gradient(90deg, #222 0 1px, #8a8a8a 1px 2px); }
.canvas { position: relative; flex: 1; border: 2px solid #8f9094; border-width: 1px 0 0 2px; background: #212830; overflow: hidden; }
.drawing { position: absolute; width: 100%; height: 100%; }
.viewlabel { position: absolute; left: 3px; top: 5px; color: #eee; font-size: 12px; line-height: 18px; }
.float { position: absolute; left: 169px; top: 102px; display: flex; height: 23px; background: #585858; }
.float .panel { border: 0; }
.close { width: 8px; height: 13px; }
.mark { position: absolute; left: 1017px; top: 579px; }
.under { position: absolute; left: 0; top: 0; }
.under path, .under ellipse { stroke-width: 0; }
.jing { font-size: 31px; fill: #d5d7da; stroke: none; }
.badge { position: relative; display: flex; align-items: center; gap: 16px; width: 235px; height: 115px; margin: 8px 0 0 6px; padding: 0 11px 0 13px; background: #233056; color: #d3d6de; }
.badge svg { stroke: #d3d6de; }
.brand { flex: 1; }
.cn { display: flex; justify-content: space-between; font-size: 33px; line-height: 38px; font-weight: 700; }
.url { font-family: "DejaVu Sans", sans-serif; font-size: 17px; line-height: 18px; font-weight: 300; }
.note { position: absolute; left: 0; top: 0; pointer-events: none; }
```
FILE: grid.js
```js
const grid = document.getElementById('grid');
const STEP = 16.36;
const ORIGIN_X = 409.5;
const ORIGIN_Y = 86.5;

function line(d, major) {
  const p = document.createElementNS('http://www.w3.org/2000/svg', 'path');
  p.setAttribute('d', d);
  p.setAttribute('stroke', major ? '#353d46' : '#262e37');
  grid.appendChild(p);
}

function draw() {
  const w = grid.ownerSVGElement.clientWidth;
  const h = grid.ownerSVGElement.clientHeight;
  grid.replaceChildren();
  for (const major of [false, true]) {
    for (let i = -120; i < 240; i++) {
      if ((i % 5 === 0) !== major) continue;
      const x = Math.floor(ORIGIN_X + i * STEP) + 0.5;
      const y = Math.floor(ORIGIN_Y + i * STEP) + 0.5;
      if (x > 0 && x < w) line(`M${x} 0V${h}`, major);
      if (y > 0 && y < h) line(`M0 ${y}H${w}`, major);
    }
  }
}

draw();
addEventListener('resize', draw);
```
